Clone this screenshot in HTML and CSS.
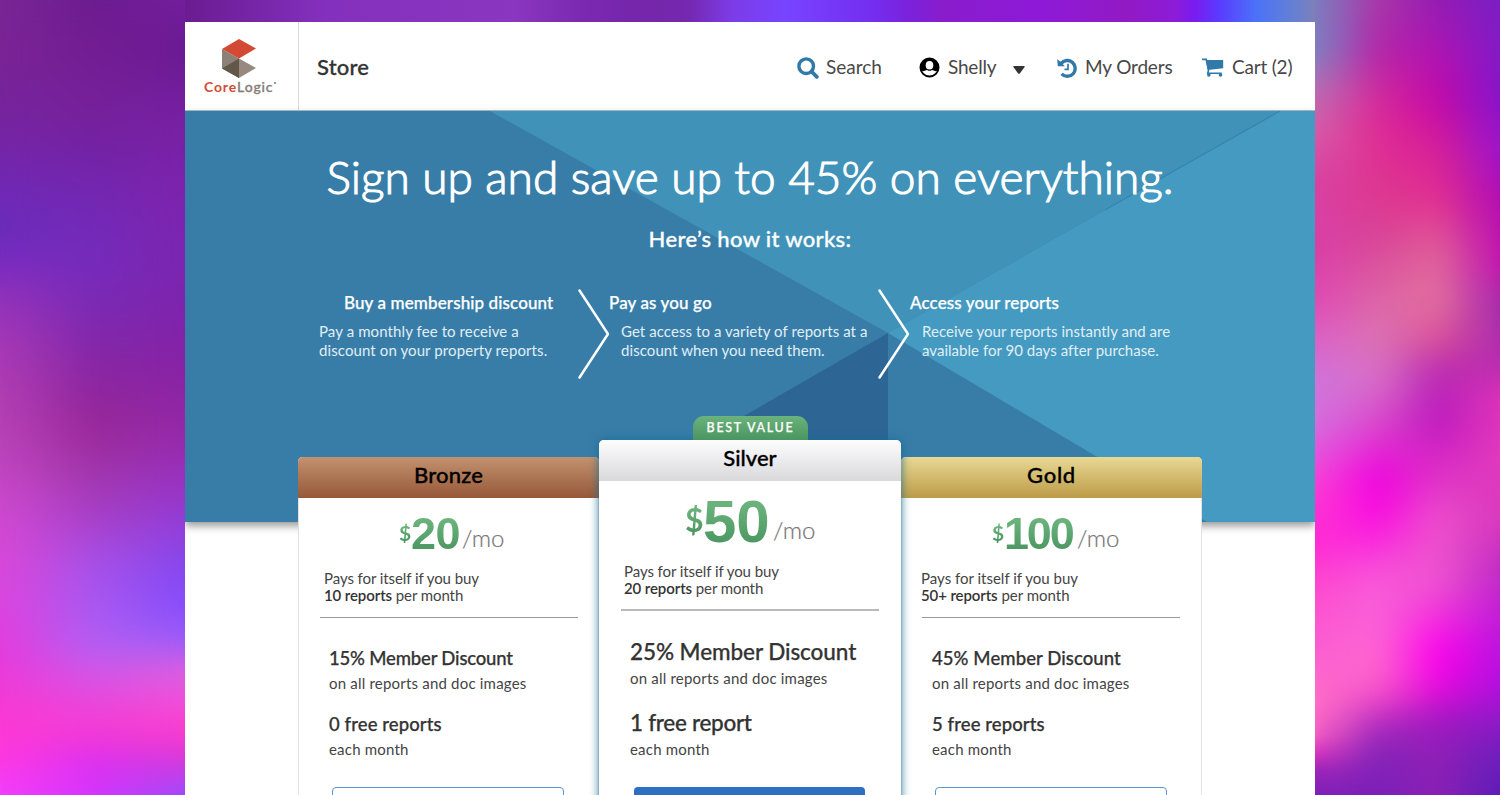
FILE: index.html
```html
<!DOCTYPE html>
<html lang="en">
<head>
<meta charset="utf-8">
<title>CoreLogic Store</title>
<link rel="stylesheet" href="styles.css">
</head>
<body>
<div class="backdrop">
  <div class="side side-left"><i class="l1"></i><i class="l2"></i><i class="l3"></i></div>
  <div class="strip"></div>
  <div class="side side-right"><i class="r1"></i><i class="r2"></i><i class="r3"></i><i class="r4"></i></div>
</div>
<div class="app">
  <header class="header">
    <div class="brand">
      <svg class="brand-mark" width="34" height="39" viewBox="0 0 34 39">
        <path fill="#8b8178" d="M0 10 17 19.500V39L0 29.500Z"/>
        <path fill="#63574a" d="M17 19.500V39L0 29.500Z"/>
        <path fill="#978980" d="M17 19.500 34 29 17 39Z"/>
        <path fill="#d34a34" d="M17 0 34 9.500 17 19.500 0 10Z"/>
      </svg>
      <div class="brand-name"><b>Core</b><span>Logic</span><sup>•</sup></div>
    </div>
    <div class="store">Store</div>
    <nav class="nav">
      <a class="nav-item search">
        <svg width="22" height="22" viewBox="0 0 22 22" fill="none" stroke="#3079a8"><circle cx="9.200" cy="9.200" r="7.300" stroke-width="3.400"/><path d="M14.500 14.500 19.800 19.800" stroke-width="3.800" stroke-linecap="round"/></svg>
        <span>Search</span>
      </a>
      <a class="nav-item user">
        <svg width="21" height="21" viewBox="0 0 21 21"><circle cx="10.500" cy="10.500" r="9" fill="#fff" stroke="#000" stroke-width="2"/><path d="M2 13.500A9 9 0 0 1 10.500 1.500A9 9 0 0 1 19 13.500L16.500 14.200C15.300 13.500 14 13.100 12.800 12.900Q10.500 14.600 8.200 12.900C7 13.100 5.700 13.500 4.500 14.200Z"/><ellipse cx="10.500" cy="8.200" rx="3.800" ry="4.300" fill="#fff"/></svg>
        <span>Shelly</span>
        <svg class="caret" width="12" height="8" viewBox="0 0 12 8"><path fill="#333" d="M.8 0H11.200Q12 .2 11.600 1L6.800 7.400Q6 8.200 5.200 7.400L.4 1Q0 .2.8 0Z"/></svg>
      </a>
      <a class="nav-item orders">
        <svg width="20" height="20" viewBox="0 0 20 20"><path d="M4 5.600A7.900 7.900 0 1 1 4.600 15.900" fill="none" stroke="#3079a8" stroke-width="3.400"/><path fill="#3079a8" d="M.2 1.200 3 3.200 7.800 8.300H.8Z"/><path d="M11 5.800V11.300H7.500" fill="none" stroke="#3079a8" stroke-width="1.700"/></svg>
        <span>My Orders</span>
      </a>
      <a class="nav-item cart">
        <svg width="22" height="19" viewBox="0 0 22 19"><path fill="#3079a8" d="M3.800 2H21.200V10.200L5.800 12Z"/><circle cx="6.800" cy="17" r="1.800" fill="#3079a8"/><circle cx="18.500" cy="17" r="1.800" fill="#3079a8"/><path d="M0 1.400H4.200L6.500 12.300 5.800 15.300H19.800" fill="none" stroke="#3079a8" stroke-width="1.600"/></svg>
        <span>Cart (2)</span>
      </a>
    </nav>
  </header>

  <section class="hero">
    <svg class="facets" viewBox="0 0 1130 411" preserveAspectRatio="none">
      <path fill="#4192b9" d="M305 0 703 222 1095 0Z"/>
      <path fill="#449ac0" d="M1095 0 703 222 1022 411H1130V0Z"/>
      <path fill="#2d6594" d="M703 222V411H375Z"/>
      <path fill="none" stroke="#3785ae" stroke-width="1.200" d="M1095 0 920 99"/>
    </svg>
    <h1>Sign up and save up to 45% on everything.</h1>
    <h2>Here’s how it works:</h2>
    <div class="steps">
      <div class="step first"><h3>Buy a membership discount</h3><p>Pay a monthly fee to receive a<br>discount on your property reports.</p></div>
      <svg class="chevron" width="31" height="90" viewBox="0 0 31 90"><path d="M1.500 1.500 30 45 1.500 88.500"/></svg>
      <div class="step"><h3>Pay as you go</h3><p>Get access to a variety of reports at a<br>discount when you need them.</p></div>
      <svg class="chevron" width="31" height="90" viewBox="0 0 31 90"><path d="M1.500 1.500 30 45 1.500 88.500"/></svg>
      <div class="step last"><h3>Access your reports</h3><p>Receive your reports instantly and are<br>available for 90 days after purchase.</p></div>
    </div>
  </section>

  <section class="plans">
    <article class="plan bronze">
      <h2 class="plan-name">Bronze</h2>
      <div class="price"><span class="currency">$</span><span class="amount">20</span><span class="period">/mo</span></div>
      <p class="pays">Pays for itself if you buy<br><b>10 reports</b> per month</p>
      <hr>
      <h3 class="discount">15% Member Discount</h3><p class="note">on all reports and doc images</p>
      <h3 class="free">0 free reports</h3><p class="note month">each month</p>
      <div class="button"></div>
    </article>
    <article class="plan silver">
      <span class="badge">BEST VALUE</span>
      <h2 class="plan-name">Silver</h2>
      <div class="price"><span class="currency">$</span><span class="amount">50</span><span class="period">/mo</span></div>
      <p class="pays">Pays for itself if you buy<br><b>20 reports</b> per month</p>
      <hr>
      <h3 class="discount">25% Member Discount</h3><p class="note">on all reports and doc images</p>
      <h3 class="free">1 free report</h3><p class="note month">each month</p>
      <div class="button"></div>
    </article>
    <article class="plan gold">
      <h2 class="plan-name">Gold</h2>
      <div class="price"><span class="currency">$</span><span class="amount">100</span><span class="period">/mo</span></div>
      <p class="pays">Pays for itself if you buy<br><b>50+ reports</b> per month</p>
      <hr>
      <h3 class="discount">45% Member Discount</h3><p class="note">on all reports and doc images</p>
      <h3 class="free">5 free reports</h3><p class="note month">each month</p>
      <div class="button"></div>
    </article>
  </section>
</div>
</body>
</html>
```
FILE: styles.css
```css
* { box-sizing: border-box; margin: 0; padding: 0; }
body {
  height: 795px;
  padding: 22px 185px 0;
  overflow: hidden;
  font-family: Lato, sans-serif;
  color: #333;
}

/* Colourful mesh behind the page: vertical ramps cross-faded horizontally */
.backdrop { position: absolute; inset: 0; z-index: -1; overflow: hidden; display: flex; }
.strip {
  flex: 1; height: 30px;
  background: linear-gradient(90deg, #6c1c90 0, #7424a4 60px, #8430be 140px, #8a36c0 330px, #7a28b0 402px, #7526aa 460px, #7528b0 504px, #7c3ce8 548px, #7844ff 599px, #742ef0 686px, #7a22dc 722px, #8a1ccc 759px, #8e1ad8 853px, #921ac4 940px, #8c1cd8 991px, #781cf0 1010px, #5a3cff 1035px, #4a72f8 1071px, #6480d4 1108px, #7e80b8 1130px);
}
.side { position: relative; width: 185px; height: 795px; }
.side i { position: absolute; inset: 0; }
.side::after { content: ""; position: absolute; inset: 0; backdrop-filter: blur(14px); }
.l1 { background: linear-gradient(#7a2796 0, #7a2495 50px, #77249c 100px, #7526a8 150px, #6f2ab8 200px, #6a2cba 230px, #7c2cc0 265px, #9433bb 300px, #a93ab5 350px, #b33fb4 400px, #bb44bb 450px, #cc49cc 500px, #da48d8 560px, #dc45de 600px, #e73adb 660px, #fb3ad2 720px, #ff38e0 760px, #f040ff 795px); }
.l2 {
  background: linear-gradient(#6c1c90 0, #731d93 50px, #76219a 110px, #7322a5 150px, #7328b3 200px, #742bbb 250px, #7a2ab6 300px, #8427a8 350px, #91269c 400px, #9c2a9a 435px, #a238b0 480px, #a840ca 520px, #a84fe6 560px, #a957f0 600px, #b05ef4 640px, #cf58e8 670px, #e847dc 700px, #f63bd2 730px, #dc30f0 760px, #d336ff 795px);
  -webkit-mask-image: linear-gradient(90deg, transparent, #000 92px);
}
.l3 {
  background: linear-gradient(#741f9e 0, #6a1a92 50px, #7721a3 120px, #7e24ae 200px, #7b26b0 260px, #7f24ab 320px, #8823a4 370px, #9429a8 430px, #9832c0 480px, #9040dc 530px, #8448ee 570px, #854dfb 605px, #9a5cf8 640px, #d960e0 670px, #f050d8 700px, #fb3ccd 730px, #d63ad8 760px, #974dff 795px);
  -webkit-mask-image: linear-gradient(90deg, transparent 92px, #000 185px);
}
.r1 { background: linear-gradient(#7a80c0 0, #7a88c4 50px, #b772b4 90px, #d65fa9 130px, #d943a3 180px, #d93fa6 250px, #df49b5 300px, #da62c8 340px, #cf75dc 380px, #d272de 420px, #e45bdc 450px, #fc3fd2 490px, #ff2ad2 540px, #fc4fd0 600px, #fb62d0 660px, #ff72c8 700px, #ff68c4 735px, #e030c0 755px, #9a24b8 770px, #7a20b8 795px); }
.r2 {
  background: linear-gradient(#a93aa8 0, #b425a8 50px, #d02b9c 90px, #e02c94 130px, #dc3990 200px, #d84599 240px, #dc5ca0 280px, #dc72b0 330px, #d870c8 380px, #dc40cc 430px, #f000e0 480px, #fa10e0 520px, #f85ad8 580px, #fa62d8 620px, #ff66cc 670px, #f04ac8 700px, #b82cc0 720px, #8424b8 750px, #7a20b8 795px);
  -webkit-mask-image: linear-gradient(90deg, transparent, #000 62px);
}
.r3 {
  background: linear-gradient(#931cb4 0, #b512b0 60px, #c408a8 100px, #d81f98 150px, #e33090 200px, #e06098 250px, #e370a0 300px, #dc5098 340px, #b82cb0 370px, #bc18c0 420px, #d828c4 460px, #ee50cc 520px, #ee55d0 580px, #f52bde 620px, #ff00f0 650px, #e80adc 690px, #a018c0 720px, #9020b4 760px, #8a20b4 795px);
  -webkit-mask-image: linear-gradient(90deg, transparent 62px, #000 123px);
}
.r4 {
  background: linear-gradient(#7a20c4 0, #8416cc 100px, #9a14cc 150px, #b00cb4 200px, #c010b0 260px, #a028ac 310px, #b42cb0 360px, #e034b8 400px, #e03cbc 460px, #d838bc 520px, #c02cc0 560px, #bc1cd8 620px, #b010e0 680px, #901ac8 720px, #681fbc 760px, #5c1cb8 795px);
  -webkit-mask-image: linear-gradient(90deg, transparent 123px, #000 185px);
}

.app { width: 1130px; height: 773px; background: #fff; overflow: hidden; }

.header { display: flex; height: 89px; border-bottom: 1px solid #aebfca; }
.brand { width: 114px; border-right: 1px solid #d9dbdf; padding: 17px 0 0 19px; }
.brand-mark { display: block; margin-left: 18px; }
.brand-name { display: flex; font-size: 14px; line-height: 17px; letter-spacing: .85px; color: #857c75; }
.brand-name b { color: #d34a34; font-weight: 700; }
.brand-name span { font-weight: 500; -webkit-text-stroke: .3px #857c75; }
.brand-name sup { font-size: 5px; line-height: 10px; }
.store { padding-left: 18px; font-size: 22px; font-weight: 500; letter-spacing: .2px; line-height: 89px; -webkit-text-stroke: .3px #333; }
.nav { display: flex; margin-left: auto; padding-right: 20px; color: #484848; font-size: 19px; }
.nav-item { display: flex; align-items: center; height: 91px; white-space: nowrap; }
.nav-item svg { flex: none; }
.nav-item span { padding-bottom: 2px; }
.search { width: 122px; gap: 7px; }
.user { width: 138px; gap: 8px; letter-spacing: -.2px; }
.caret { margin: 4px 0 0 9px; }
.orders { width: 145px; gap: 8px; letter-spacing: -.16px; }
.cart { width: 93px; gap: 8px; letter-spacing: -.2px; }

.hero {
  position: relative; z-index: 0;
  height: 411px; padding-top: 37px;
  background: #387da8; color: #fff;
  box-shadow: 0 4px 8px rgba(0, 0, 0, .4);
}
.facets { position: absolute; inset: 0; width: 100%; height: 100%; z-index: -1; }
.hero h1 { font-size: 46px; font-weight: 300; line-height: 58px; letter-spacing: 0; text-align: center; -webkit-text-stroke: 1.1px #fff; }
.hero h2 { margin-top: 18px; font-size: 22px; font-weight: 500; line-height: 30px; letter-spacing: .33px; text-align: center; -webkit-text-stroke: .3px #fff; }
.steps { display: flex; margin-top: 35px; padding-left: 134px; }
.step { width: 269px; padding-top: 3px; white-space: nowrap; }
.step h3 { font-size: 17px; font-weight: 500; line-height: 22px; letter-spacing: .12px; -webkit-text-stroke: .25px #fff; }
.step p { margin-top: 8px; padding-left: 12px; font-size: 15px; line-height: 19px; letter-spacing: .07px; color: #e0eef6; }
.first { width: 259px; }
.first h3 { padding-left: 25px; }
.first p { padding-left: 0; letter-spacing: .1px; }
.last { padding-left: 1px; }
.last p { letter-spacing: .03px; }
.chevron { flex: none; }
.chevron path { fill: none; stroke: #fff; stroke-width: 2.5; stroke-linecap: round; stroke-linejoin: round; }

.plans { position: relative; z-index: 1; display: grid; grid-template-columns: 301px 302px 301px; margin: -65px 113px 0; }
.plan { height: 400px; background: #fff; border-radius: 5px 5px 0 0; box-shadow: inset 0 0 0 1px #dfe1e5; white-space: nowrap; }
.plan-name { height: 41px; border-radius: 5px 5px 0 0; font-size: 22px; font-weight: 500; line-height: 36px; text-align: center; color: #000; letter-spacing: .17px; -webkit-text-stroke: .35px #000; }
.bronze .plan-name { background: linear-gradient(#c39270, #965838); }
.silver .plan-name { background: linear-gradient(#fdfdfe, #d9d9dc); letter-spacing: 0; }
.gold .plan-name { background: linear-gradient(#e8d994, #bd9b49); letter-spacing: .7px; }
.silver { position: relative; z-index: 1; margin-top: -17px; box-shadow: 0 0 9px 1px rgba(22, 108, 145, .75); }
.badge {
  position: absolute; left: 94px; top: -24px; width: 115px; height: 24px;
  border-radius: 11px 11px 0 0; background: linear-gradient(#6bb37c, #4a9560);
  color: #fff; font-size: 12.5px; font-weight: 500; line-height: 24px; letter-spacing: 1.7px; text-align: center;
  -webkit-text-stroke: .25px #fff;
}
.price { display: flex; align-items: flex-start; height: 72px; padding-left: 101px; line-height: 1; }
.price span { line-height: 1; }
.currency, .amount { font-weight: 700; color: transparent; background: linear-gradient(#6bb37c 20%, #4a9560 90%); -webkit-background-clip: text; background-clip: text; }
.currency { margin-top: 24px; width: 12px; font-size: 21px; }
.amount { margin-top: 13px; width: 51px; font-family: "Liberation Sans", Arial, sans-serif; font-size: 45px; letter-spacing: -.5px; }
.period { margin-top: 28px; font-size: 24px; font-weight: 300; color: #777; -webkit-text-stroke: .2px #777; }
.silver .price { height: 82px; padding-left: 86px; }
.silver .currency { margin-top: 23px; width: 18px; font-size: 32px; }
.silver .amount { margin-top: 11px; width: 70px; font-size: 60px; letter-spacing: 0; }
.silver .period { margin-top: 37px; }
.gold .price { padding-left: 91px; }
.gold .amount { width: 73px; letter-spacing: -2.2px; }
.pays { padding-left: 26px; font-size: 15px; line-height: 17px; letter-spacing: -.08px; color: #444; }
.pays b { font-weight: 600; color: #333; letter-spacing: -.1px; }
.silver .pays { padding-left: 25px; }
.gold .pays { padding-left: 20px; letter-spacing: 0; }
.plan hr { width: 258px; height: 1px; margin: 13px 0 0 22px; border: 0; background: #999; }
.silver hr { height: 2px; margin-top: 12px; background: #b9b9b9; }
.gold hr { margin-left: 21px; }
.discount, .free { padding-left: 31px; font-size: 18.5px; line-height: 26px; font-weight: 500; -webkit-text-stroke: .25px #333; }
.discount { margin-top: 27px; letter-spacing: -.18px; }
.free { margin-top: 18px; letter-spacing: .1px; }
.gold .discount { letter-spacing: .08px; }
.note { margin-top: 2px; padding-left: 31px; font-size: 15px; line-height: 20px; letter-spacing: .2px; color: #444; }
.silver .discount, .silver .free { font-size: 22.5px; line-height: 30px; letter-spacing: -.08px; }
.silver .free { margin-top: 20px; letter-spacing: -.3px; }
.silver .discount { margin-top: 26px; }
.silver .note { margin-top: 1px; }
.button { width: 232px; height: 44px; margin: 28px 0 0 34px; border: 1.5px solid #5c94cf; border-radius: 4px; }
.silver .button { margin-left: 35px; width: 231px; border: 0; background: #2e6fc1; }
```
